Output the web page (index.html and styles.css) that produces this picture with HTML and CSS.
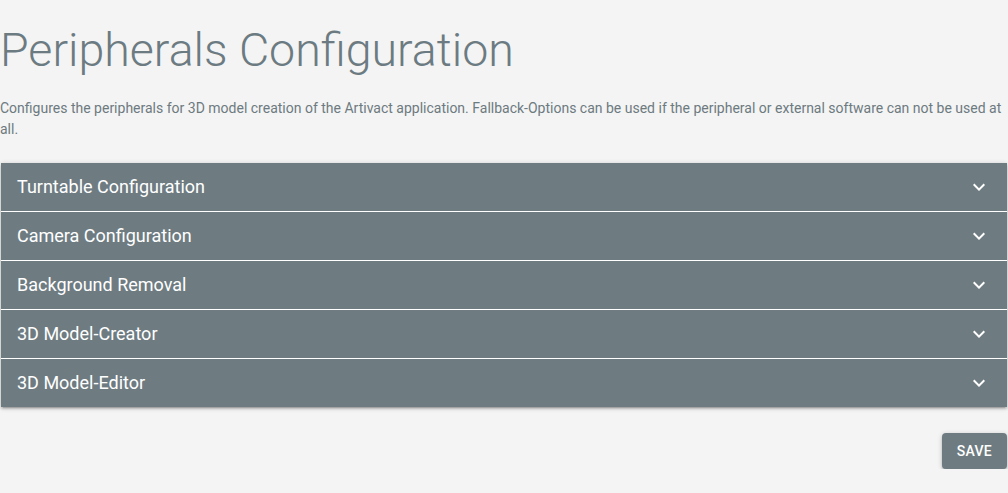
FILE: index.html
```html
<!DOCTYPE html>
<html lang="en">
<head>
<meta charset="utf-8">
<title>Peripherals Configuration</title>
<link rel="stylesheet" href="styles.css">
</head>
<body>
<main class="page">
  <h1 class="title">Peripherals Configuration</h1>
  <p class="desc">Configures the peripherals for 3D model creation of the Artivact application. Fallback-Options can be used if the peripheral or external software can not be used at all.</p>
  <div class="accordion">
    <div class="item"><span class="label">Turntable Configuration</span><svg class="chev" viewBox="0 0 24 24"><path d="M16.59 8.59 12 13.17 7.41 8.59 6 10l6 6 6-6z"/></svg></div>
    <div class="item"><span class="label">Camera Configuration</span><svg class="chev" viewBox="0 0 24 24"><path d="M16.59 8.59 12 13.17 7.41 8.59 6 10l6 6 6-6z"/></svg></div>
    <div class="item"><span class="label">Background Removal</span><svg class="chev" viewBox="0 0 24 24"><path d="M16.59 8.59 12 13.17 7.41 8.59 6 10l6 6 6-6z"/></svg></div>
    <div class="item"><span class="label">3D Model-Creator</span><svg class="chev" viewBox="0 0 24 24"><path d="M16.59 8.59 12 13.17 7.41 8.59 6 10l6 6 6-6z"/></svg></div>
    <div class="item"><span class="label">3D Model-Editor</span><svg class="chev" viewBox="0 0 24 24"><path d="M16.59 8.59 12 13.17 7.41 8.59 6 10l6 6 6-6z"/></svg></div>
  </div>
  <div class="actions">
    <button class="save" type="button">Save</button>
  </div>
</main>
</body>
</html>
```
FILE: styles.css
```css
html, body {
  margin: 0;
  padding: 0;
  background: #f4f4f4;
  font-family: Roboto, "Liberation Sans", Arial, sans-serif;
}

.page {
  display: flex;
  flex-direction: column;
}

.title {
  margin: 25px 0 23px 0;
  font-size: 46.5px;
  line-height: 50px;
  font-weight: 300;
  color: #6c7b82;
}

.desc {
  margin: 0 0 23px 0;
  font-size: 14px;
  line-height: 21px;
  color: #6d7a80;
}

.accordion {
  margin: 0 1px;
  display: flex;
  flex-direction: column;
  gap: 1px;
  background: #ffffff;
  box-shadow: 0 1px 5px rgba(0,0,0,.2), 0 2px 2px rgba(0,0,0,.14), 0 3px 1px -2px rgba(0,0,0,.12);
}

.item {
  display: flex;
  align-items: center;
  justify-content: space-between;
  height: 48px;
  padding: 0 16px;
  background: #6e7c82;
  color: #ffffff;
}

.label {
  font-size: 18px;
  line-height: 24px;
}

.chev {
  width: 24px;
  height: 24px;
  fill: #ffffff;
}

.actions {
  display: flex;
  justify-content: flex-end;
  margin: 26px 1px 0 0;
}

.save {
  height: 36px;
  padding: 0 15px;
  border: 0;
  border-radius: 4px;
  background: #6e7c82;
  color: #ffffff;
  font-family: Roboto, "Liberation Sans", Arial, sans-serif;
  font-size: 14px;
  font-weight: 500;
  letter-spacing: 0.02em;
  text-transform: uppercase;
  box-shadow: 0 1px 5px rgba(0,0,0,.2), 0 2px 2px rgba(0,0,0,.14), 0 3px 1px -2px rgba(0,0,0,.12);
}
```
